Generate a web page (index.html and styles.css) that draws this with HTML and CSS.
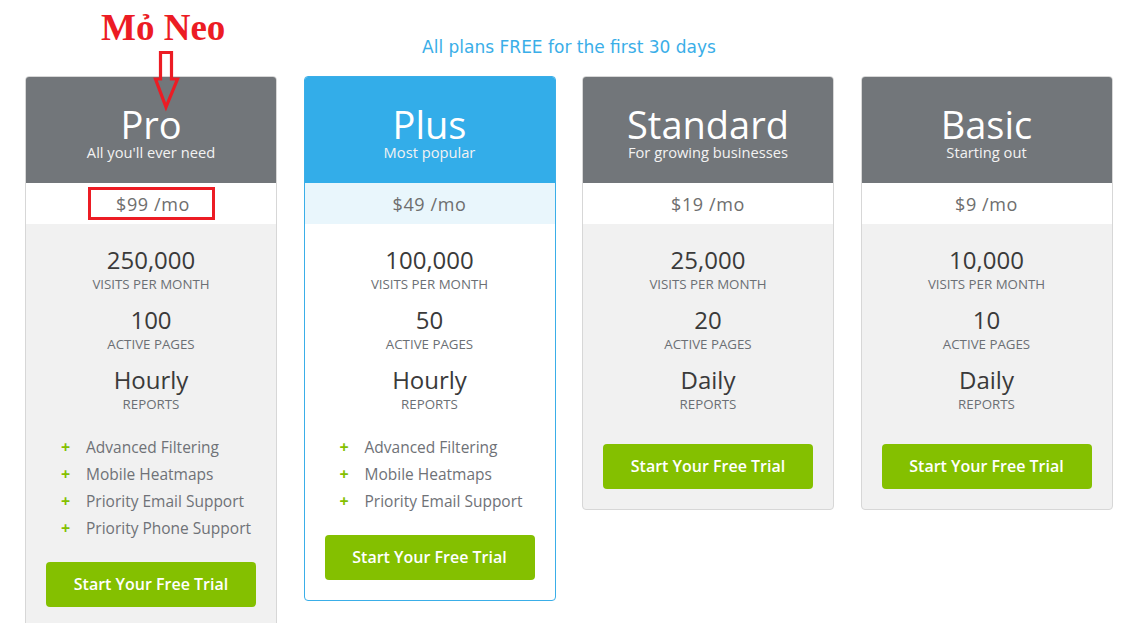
FILE: index.html
```html
<!DOCTYPE html>
<html lang="vi">
<head>
<meta charset="utf-8">
<title>Pricing</title>
<link rel="stylesheet" href="styles.css">
</head>
<body>
<div class="page">
  <p class="tagline">All plans FREE for the first 30 days</p>
  <div class="plans">
    <div class="card">
      <div class="card-head">
        <h2 class="plan-name">Pro</h2>
        <p class="plan-sub">All you'll ever need</p>
      </div>
      <div class="price"><span class="price-mark">$99 /mo</span></div>
      <div class="card-body">
        <div class="stats">
          <div class="stat"><div class="stat-val">250,000</div><div class="stat-label">VISITS PER MONTH</div></div>
          <div class="stat"><div class="stat-val">100</div><div class="stat-label">ACTIVE PAGES</div></div>
          <div class="stat"><div class="stat-val">Hourly</div><div class="stat-label">REPORTS</div></div>
        </div>
        <ul class="features">
          <li><span class="plus">+</span>Advanced Filtering</li>
          <li><span class="plus">+</span>Mobile Heatmaps</li>
          <li><span class="plus">+</span>Priority Email Support</li>
          <li><span class="plus">+</span>Priority Phone Support</li>
        </ul>
        <a class="cta" href="#">Start Your Free Trial</a>
      </div>
    </div>
    <div class="card card-featured">
      <div class="card-head">
        <h2 class="plan-name">Plus</h2>
        <p class="plan-sub">Most popular</p>
      </div>
      <div class="price">$49 /mo</div>
      <div class="card-body">
        <div class="stats">
          <div class="stat"><div class="stat-val">100,000</div><div class="stat-label">VISITS PER MONTH</div></div>
          <div class="stat"><div class="stat-val">50</div><div class="stat-label">ACTIVE PAGES</div></div>
          <div class="stat"><div class="stat-val">Hourly</div><div class="stat-label">REPORTS</div></div>
        </div>
        <ul class="features">
          <li><span class="plus">+</span>Advanced Filtering</li>
          <li><span class="plus">+</span>Mobile Heatmaps</li>
          <li><span class="plus">+</span>Priority Email Support</li>
        </ul>
        <a class="cta" href="#">Start Your Free Trial</a>
      </div>
    </div>
    <div class="card">
      <div class="card-head">
        <h2 class="plan-name">Standard</h2>
        <p class="plan-sub">For growing businesses</p>
      </div>
      <div class="price">$19 /mo</div>
      <div class="card-body">
        <div class="stats">
          <div class="stat"><div class="stat-val">25,000</div><div class="stat-label">VISITS PER MONTH</div></div>
          <div class="stat"><div class="stat-val">20</div><div class="stat-label">ACTIVE PAGES</div></div>
          <div class="stat"><div class="stat-val">Daily</div><div class="stat-label">REPORTS</div></div>
        </div>
        <a class="cta" href="#">Start Your Free Trial</a>
      </div>
    </div>
    <div class="card">
      <div class="card-head">
        <h2 class="plan-name">Basic</h2>
        <p class="plan-sub">Starting out</p>
      </div>
      <div class="price">$9 /mo</div>
      <div class="card-body">
        <div class="stats">
          <div class="stat"><div class="stat-val">10,000</div><div class="stat-label">VISITS PER MONTH</div></div>
          <div class="stat"><div class="stat-val">10</div><div class="stat-label">ACTIVE PAGES</div></div>
          <div class="stat"><div class="stat-val">Daily</div><div class="stat-label">REPORTS</div></div>
        </div>
        <a class="cta" href="#">Start Your Free Trial</a>
      </div>
    </div>
  </div>
  <div class="note">Mỏ Neo</div>
  <svg class="note-arrow" width="50" height="70" viewBox="0 0 50 70">
    <polygon points="20.5,7.5 31.5,7.5 31.5,34 37.5,34 26,62 15.5,34 20.5,34" fill="none" stroke="#ec1c24" stroke-width="3.2" stroke-linejoin="miter"/>
  </svg>
</div>
</body>
</html>
```

FILE: styles.css
```css
* { box-sizing: border-box; }
html, body { margin: 0; padding: 0; background: #fff; }
body {
  font-family: "Open Sans", "DejaVu Sans", sans-serif;
  color: #333;
}
.page {
  position: relative;
  width: 1146px;
  height: 623px;
  overflow: hidden;
  padding-top: 36px;
}
.tagline {
  margin: 0 0 18px;
  padding-right: 8px;
  text-align: center;
  font-family: "DejaVu Sans", sans-serif;
  font-size: 17px;
  line-height: 22px;
  color: #3aaee8;
}
.plans {
  display: flex;
  justify-content: flex-start;
  align-items: flex-start;
  gap: 26.5px;
  padding-left: 25px;
}
.card {
  width: 252px;
  flex: none;
  border: 1px solid #d7d7d7;
  border-radius: 4px;
  overflow: hidden;
  background: #f1f1f1;
}
.card-head {
  background: #72767a;
  color: #fff;
  text-align: center;
  height: 106px;
  padding-top: 28px;
}
.plan-name {
  margin: 0;
  font-weight: 400;
  font-size: 38px;
  line-height: 38px;
}
.plan-sub {
  margin: 0;
  font-size: 14.7px;
  line-height: 19px;
  color: #f2f2f2;
}
.price {
  height: 41px;
  background: #fff;
  display: flex;
  align-items: center;
  justify-content: center;
  font-size: 18px;
  letter-spacing: 0.6px;
  color: #6e6e6e;
}
.price-mark {
  display: flex;
  align-items: center;
  justify-content: center;
  width: 127px;
  height: 33px;
  border: 3px solid #ec1c24;
  padding-left: 4px;
}
.card-body {
  padding: 22px 20px 20px;
  text-align: center;
}
.stats {
  display: flex;
  flex-direction: column;
  gap: 12px;
}
.stat-val {
  font-size: 24px;
  line-height: 28px;
  color: #3a3a3a;
}
.stat-label {
  font-size: 13.3px;
  line-height: 20px;
  color: #6b6f74;
}
.features {
  list-style: none;
  margin: 20px 0 20px;
  padding: 0 0 0 15px;
  text-align: left;
}
.features li {
  font-size: 15.5px;
  line-height: 27px;
  height: 27px;
  color: #6f7277;
  display: flex;
  align-items: center;
}
.plus {
  width: 25px;
  color: #84c000;
  font-weight: 700;
  font-size: 16px;
}
.stats + .cta { margin-top: 30px; }
.cta {
  display: flex;
  align-items: center;
  justify-content: center;
  height: 45px;
  padding-bottom: 2px;
  background: #84c000;
  border-radius: 4px;
  color: #fff;
  font-weight: 600;
  font-size: 16px;
  text-decoration: none;
}
.card-featured {
  border-color: #3aaee8;
  background: #fff;
}
.card-featured .card-head { background: #33ade9; }
.card-featured .price { background: #e9f6fc; }
.note {
  position: absolute;
  left: 101px;
  top: 6px;
  font-family: "Liberation Serif", serif;
  font-weight: 700;
  font-size: 37px;
  line-height: 44px;
  color: #ec1c24;
}
.note-arrow {
  position: absolute;
  left: 140px;
  top: 45px;
}
```
